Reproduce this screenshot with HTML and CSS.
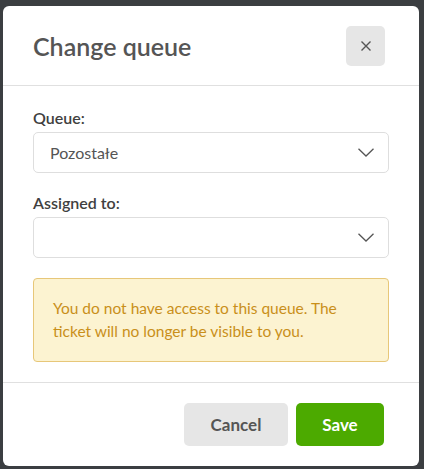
FILE: index.html
```html
<!DOCTYPE html>
<html lang="en">
<head>
<meta charset="utf-8">
<title>Change queue</title>
<link rel="stylesheet" href="styles.css">
</head>
<body>
<div class="modal">
  <div class="modal-header">
    <h2 class="modal-title">Change queue</h2>
    <button class="close-btn" type="button" aria-label="Close">
      <svg width="10" height="10" viewBox="0 0 10 10"><path d="M0.5 0.5 L9.5 9.5 M9.5 0.5 L0.5 9.5" stroke="#555" stroke-width="1.4" fill="none"/></svg>
    </button>
  </div>
  <div class="modal-body">
    <div class="field">
      <label class="field-label">Queue:</label>
      <div class="select">
        <span class="select-value">Pozostałe</span>
        <svg class="chevron" width="16" height="9" viewBox="0 0 16 9"><path d="M0.5 0.8 L8 8 L15.5 0.8" stroke="#555" stroke-width="1.3" fill="none"/></svg>
      </div>
    </div>
    <div class="field">
      <label class="field-label">Assigned to:</label>
      <div class="select">
        <span class="select-value"></span>
        <svg class="chevron" width="16" height="9" viewBox="0 0 16 9"><path d="M0.5 0.8 L8 8 L15.5 0.8" stroke="#555" stroke-width="1.3" fill="none"/></svg>
      </div>
    </div>
    <div class="alert">You do not have access to this queue. The ticket will no longer be visible to you.</div>
  </div>
  <div class="modal-footer">
    <button class="btn btn-cancel" type="button">Cancel</button>
    <button class="btn btn-save" type="button">Save</button>
  </div>
</div>
</body>
</html>
```
FILE: styles.css
```css
html, body {
  margin: 0;
  padding: 0;
}
body {
  background: #3b3e41;
  font-family: Lato, "Open Sans", sans-serif;
  width: 424px;
  height: 469px;
  overflow: hidden;
  padding-top: 6px;
  padding-left: 3px;
  box-sizing: border-box;
}
.modal {
  width: 416px;
  height: 460px;
  background: #fff;
  border-radius: 6px;
  display: flex;
  flex-direction: column;
  box-sizing: border-box;
}
.modal-header {
  display: flex;
  align-items: center;
  justify-content: space-between;
  padding: 20px 34px 19px 30px;
  border-bottom: 1px solid #e0e0e0;
}
.modal-title {
  margin: 0;
  font-size: 25px;
  font-weight: 600;
  color: #555;
  line-height: 30px;
}
.close-btn {
  width: 39px;
  height: 40px;
  border: none;
  border-radius: 5px;
  background: #e6e6e6;
  display: flex;
  align-items: center;
  justify-content: center;
  padding: 0;
}
.modal-body {
  padding: 22px 30px 20px 30px;
  display: flex;
  flex-direction: column;
  gap: 20px;
  border-bottom: 1px solid #e0e0e0;
}
.field {
  display: flex;
  flex-direction: column;
}
.field-label {
  font-size: 16px;
  line-height: 20px;
  font-weight: 600;
  color: #404040;
  margin-bottom: 4px;
}
.select {
  height: 41px;
  box-sizing: border-box;
  border: 1px solid #dedede;
  border-radius: 5px;
  display: flex;
  align-items: center;
  justify-content: space-between;
  padding: 0 14px 0 16px;
}
.select-value {
  font-size: 16px;
  color: #555;
}
.alert {
  background: #fcf3d1;
  border: 1px solid #e7c779;
  border-radius: 4px;
  color: #c98f1a;
  font-size: 15.5px;
  line-height: 23px;
  padding: 18px 19px;
}
.modal-footer {
  display: flex;
  justify-content: flex-end;
  gap: 8px;
  padding: 20px 35px 20px 30px;
}
.btn {
  height: 43px;
  border: none;
  border-radius: 5px;
  font-family: Lato, "Open Sans", sans-serif;
  font-size: 17px;
  font-weight: 700;
  padding: 0 26px;
}
.btn-cancel {
  background: #e6e6e6;
  color: #555;
  width: 104px;
}
.btn-save {
  background: #4caa00;
  color: #fff;
  width: 88px;
}
```
